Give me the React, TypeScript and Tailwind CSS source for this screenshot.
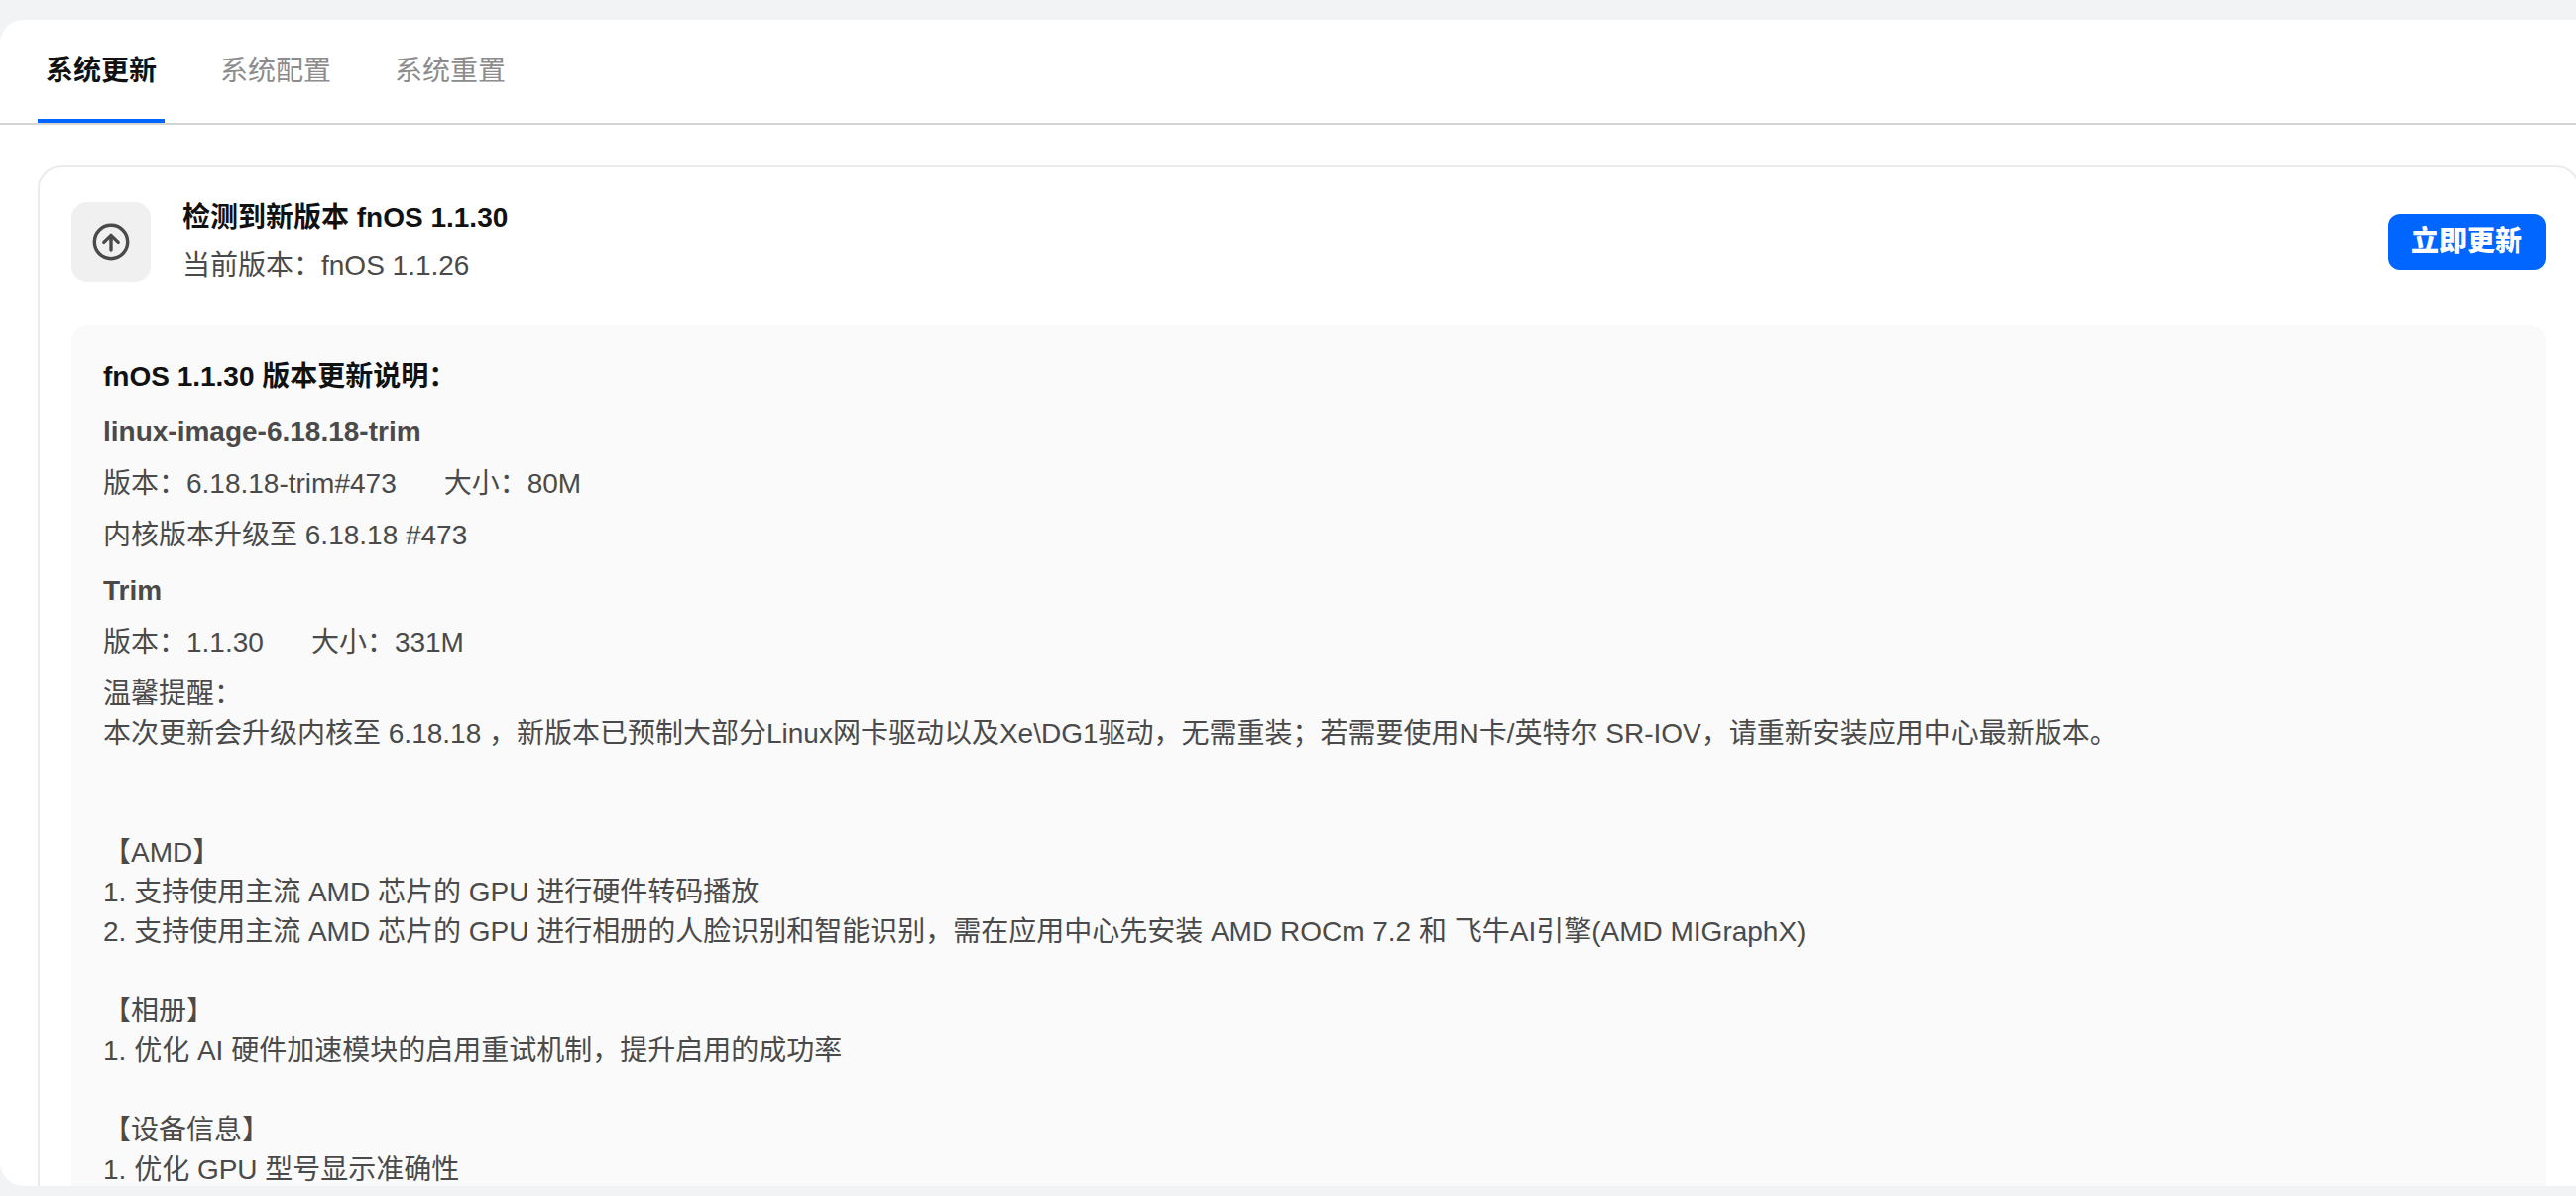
import { useState } from 'react';

const tabs = ['系统更新', '系统配置', '系统重置'];

const packages = [
    { name: 'linux-image-6.18.18-trim', version: '6.18.18-trim#473', size: '80M', notes: '内核版本升级至 6.18.18 #473' },
    {
        name: 'Trim',
        version: '1.1.30',
        size: '331M',
        notes: `温馨提醒：
本次更新会升级内核至 6.18.18 ，新版本已预制大部分Linux网卡驱动以及Xe\\DG1驱动，无需重装；若需要使用N卡/英特尔 SR-IOV，请重新安装应用中心最新版本。


【AMD】
1. 支持使用主流 AMD 芯片的 GPU 进行硬件转码播放
2. 支持使用主流 AMD 芯片的 GPU 进行相册的人脸识别和智能识别，需在应用中心先安装 AMD ROCm 7.2 和 飞牛AI引擎(AMD MIGraphX)

【相册】
1. 优化 AI 硬件加速模块的启用重试机制，提升启用的成功率

【设备信息】
1. 优化 GPU 型号显示准确性`,
    },
];

function UpgradeIcon() {
    return (
        <svg viewBox="0 0 40 40" className="size-10" fill="none" stroke="currentColor" strokeWidth="3.4" strokeLinecap="round" strokeLinejoin="round">
            <circle cx="20" cy="20" r="16.7" />
            <path d="M20 28V13.5M12.8 20.4 20 13.4l7.2 7" />
        </svg>
    );
}

export default function App() {
    const [active, setActive] = useState(0);

    return (
        <div className="h-screen overflow-hidden bg-[#f1f3f5] pt-5 pb-2.5 text-[28px] leading-10 text-[#4a4a4a] font-['Liberation_Sans','Noto_Sans_CJK_SC',sans-serif]">
            <main className="flex h-full flex-col overflow-hidden rounded-l-3xl bg-white">
                {/* Tabs */}
                <nav className="flex shrink-0 gap-12 border-b-2 border-[#d4d4d4] pl-[38px]">
                    {tabs.map((tab, i) => (
                        <button
                            key={tab}
                            type="button"
                            onClick={() => setActive(i)}
                            className={
                                i === active
                                    ? 'border-b-4 border-[#0066ff] px-2 pt-8 pb-7 font-bold text-[#111111]'
                                    : 'border-b-4 border-transparent px-2 pt-8 pb-7 text-[#8c8c8c]'
                            }
                        >
                            {tab}
                        </button>
                    ))}
                </nav>

                <div className="min-h-0 flex-1 overflow-hidden pt-10 pl-[38px]">
                    <section className="-mr-1 rounded-3xl border-2 border-[#ebebeb] px-8 pt-8">
                        {/* New version */}
                        <header className="flex items-center gap-8">
                            <div className="flex size-20 items-center justify-center rounded-2xl bg-[#f0f0f0]">
                                <UpgradeIcon />
                            </div>
                            <div className="flex-1">
                                <h1 className="pb-2 font-bold text-[#111111]">检测到新版本 fnOS 1.1.30</h1>
                                <p>当前版本：fnOS 1.1.26</p>
                            </div>
                            <button type="button" className="h-14 rounded-xl bg-[#0066ff] px-6 font-black text-white">
                                立即更新
                            </button>
                        </header>

                        {/* Release notes */}
                        <article className="mt-10 rounded-2xl bg-[#fafafa] px-8 py-8">
                            <h2 className="font-bold text-[#111111]">fnOS 1.1.30 版本更新说明：</h2>
                            {packages.map((pkg) => (
                                <div key={pkg.name} className="flex flex-col gap-3 pt-4">
                                    <h3 className="font-bold">{pkg.name}</h3>
                                    <p className="flex gap-12">
                                        <span>版本：{pkg.version}</span>
                                        <span>大小：{pkg.size}</span>
                                    </p>
                                    <p className="whitespace-pre-wrap">{pkg.notes}</p>
                                </div>
                            ))}
                        </article>
                    </section>
                </div>
            </main>
        </div>
    );
}
